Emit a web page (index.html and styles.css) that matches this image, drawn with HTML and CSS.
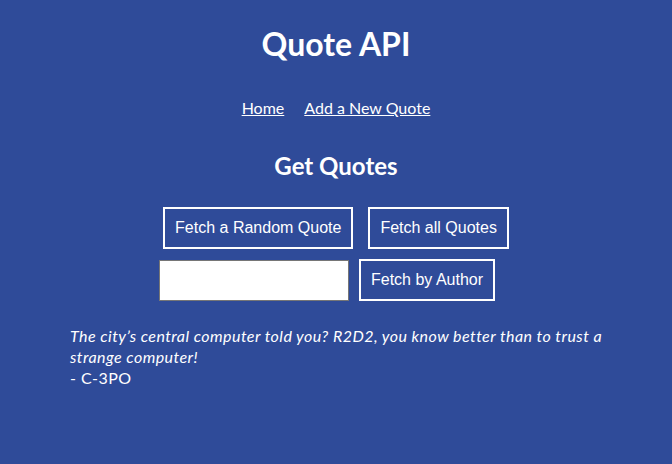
FILE: index.html
```html
<!DOCTYPE html>
<html>
<head>
<meta charset="utf-8">
<link rel="stylesheet" href="styles.css">
</head>
<body>
<header class="header">
  <h1 class="title">Quote API</h1>
  <nav class="nav">
    <a href="#" class="nav-link">Home</a>
    <a href="#" class="nav-link">Add a New Quote</a>
  </nav>
</header>
<main class="main">
  <h2 class="subtitle">Get Quotes</h2>
  <div class="row row-main">
    <button class="btn">Fetch a Random Quote</button>
    <button class="btn">Fetch all Quotes</button>
  </div>
  <div class="row row-author">
    <input class="author-input" type="text">
    <button class="btn btn-author">Fetch by Author</button>
  </div>
  <div class="quote">
    <p class="quote-text">The city’s central computer told you? R2D2, you know better than to trust a strange computer!</p>
    <p class="quote-author">- C-3PO</p>
  </div>
</main>
</body>
</html>
```
FILE: styles.css
```css
html, body {
  margin: 0;
  padding: 0;
  background: #2f4b99;
  color: #fff;
  font-family: "Lato", "Open Sans", sans-serif;
}
.header {
  text-align: center;
  padding-top: 24px;
}
.title {
  margin: 0;
  font-size: 32px;
  font-weight: 700;
  line-height: 40px;
}
.nav {
  display: flex;
  justify-content: center;
  gap: 20px;
  margin-top: 34px;
  font-size: 16px;
  line-height: 20px;
}
.nav-link {
  color: #fff;
  text-decoration: underline;
}
.main {
  display: flex;
  flex-direction: column;
  align-items: center;
}
.subtitle {
  margin: 33px 0 0;
  font-size: 24px;
  font-weight: 700;
  line-height: 30px;
}
.row {
  display: flex;
  justify-content: center;
  gap: 15px;
}
.row-main {
  margin-top: 26px;
}
.row-author {
  margin-top: 10px;
  gap: 10px;
  align-items: flex-start;
}
.btn {
  font-family: "Liberation Sans", Arial, sans-serif;
  font-size: 16px;
  color: #fff;
  background: transparent;
  border: 2px solid #fff;
  padding: 10px 10px;
  line-height: 18px;
  height: 42px;
  margin: 0;
}
.btn-author {
  margin-right: 18px;
}
.author-input {
  width: 190px;
  height: 41px;
  box-sizing: border-box;
  margin: 1px 0 0;
  border: 1px solid #767676;
  background: #fff;
}
.quote {
  align-self: stretch;
  padding: 0 62px 0 70px;
  margin-top: 24px;
  font-size: 16px;
  line-height: 21px;
  letter-spacing: 0.45px;
}
.quote-text {
  margin: 0;
  font-style: italic;
}
.quote-author {
  margin: 0;
}
```
